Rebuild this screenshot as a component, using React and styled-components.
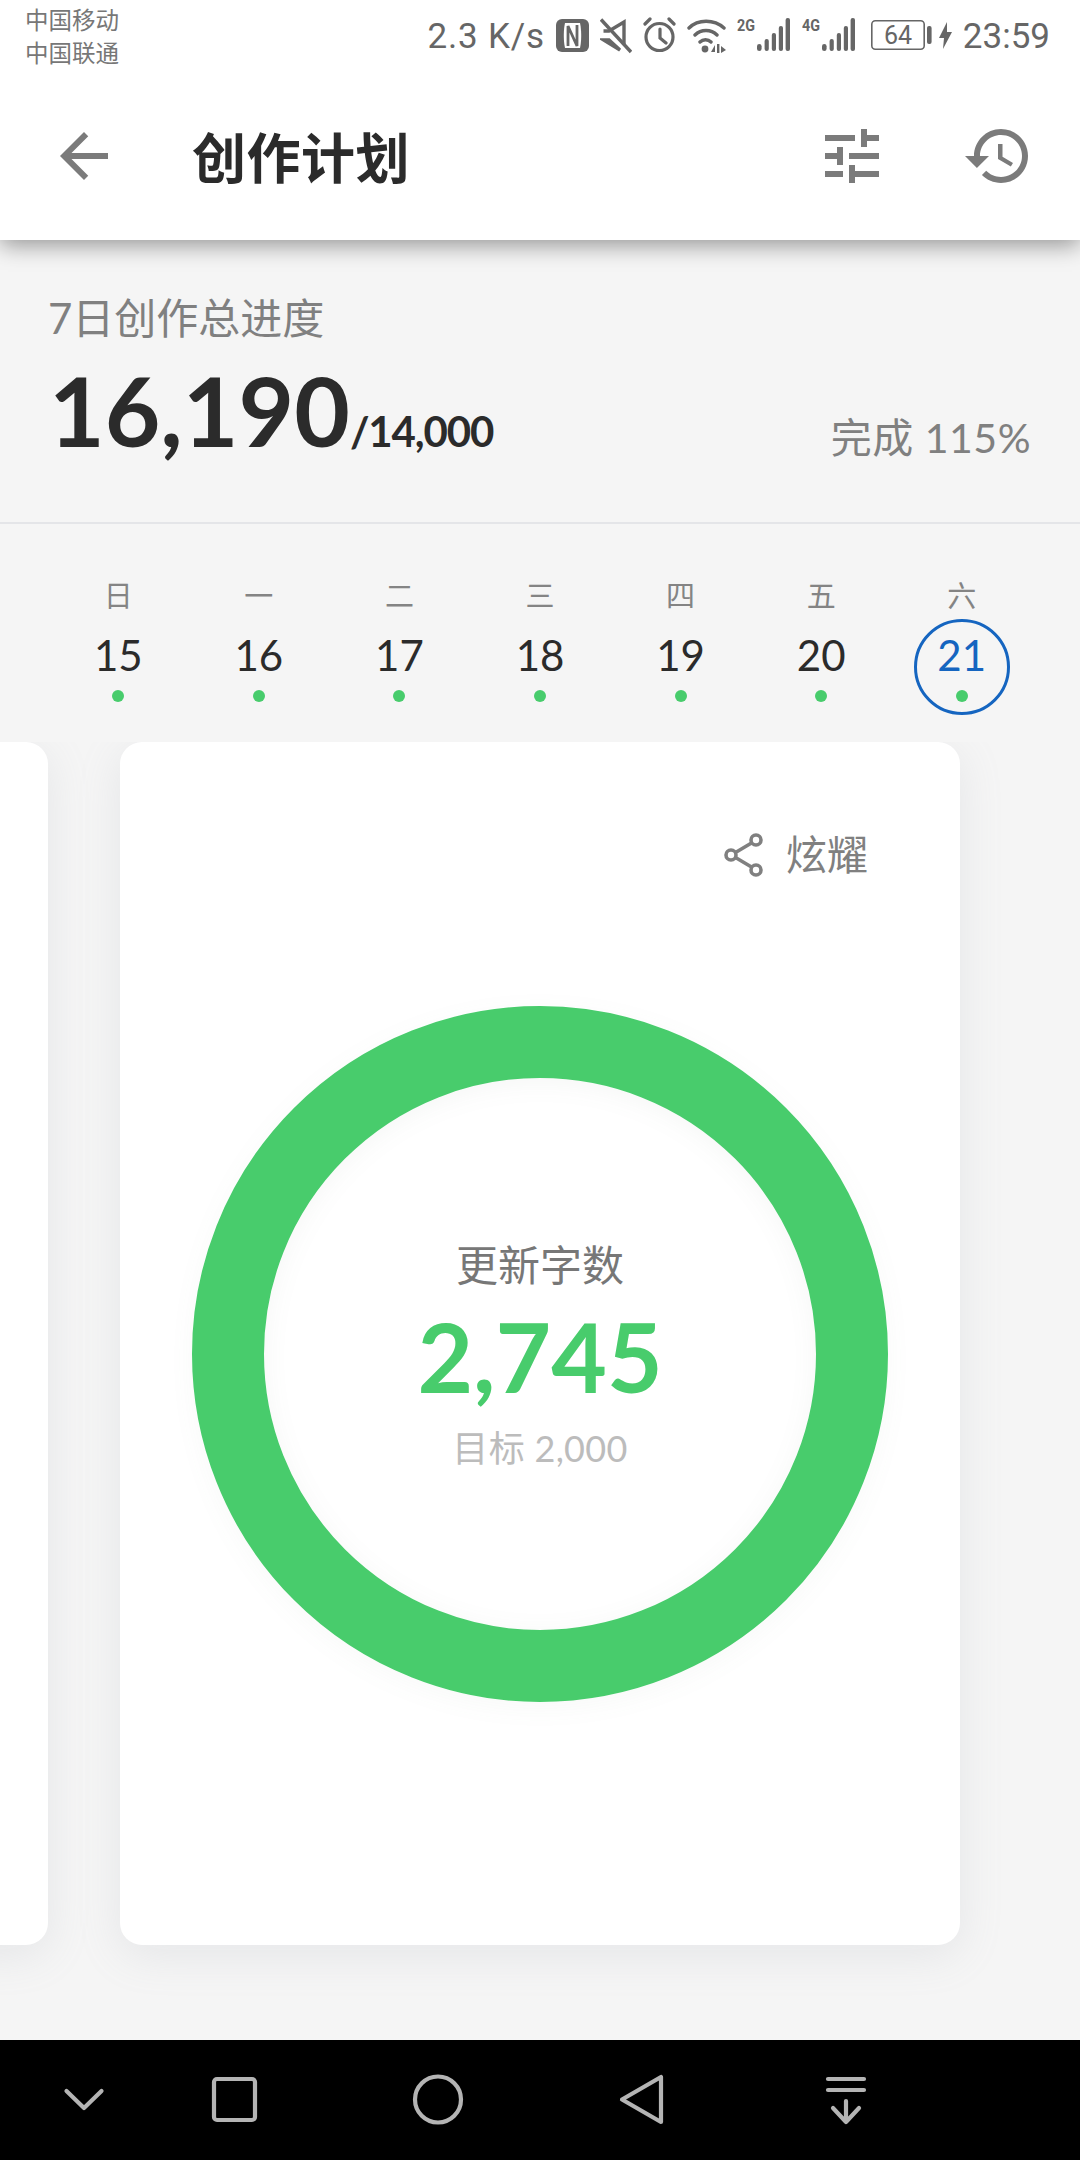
import React from "react";
import styled, { createGlobalStyle } from "styled-components";

const CJK = `"Lato", "Noto Sans CJK SC", sans-serif`;
const GREEN = "#48cc6c";
const GREY = "#666";

const Global = createGlobalStyle`
  html, body { margin: 0; padding: 0; background: #f5f5f5; }
  * { box-sizing: border-box; }
`;

const Screen = styled.div`
  width: 1080px; height: 2160px; display: flex; flex-direction: column;
  overflow: hidden; background: #f5f5f5; font-family: ${CJK};
`;
const TopBars = styled.header`
  height: 240px; background: #fff; display: flex; flex-direction: column;
  box-shadow: 0 5px 22px rgba(0,0,0,.4); position: relative; z-index: 2; flex: none;
`;
const StatusBar = styled.div`
  height: 72px; padding: 0 30px 0 25px; display: flex; justify-content: space-between; align-items: center;
`;
const Carrier = styled.div`
  font: 23.5px/33px "Noto Sans CJK SC", sans-serif; color: #777; width: 120px;
`;
const StatusRight = styled.div`
  display: flex; align-items: center; color: ${GREY};
  font: 400 35px/1 Roboto, sans-serif; gap: 11px;
`;
const Speed = styled.span`
  letter-spacing: .8px;
`;
const AppBar = styled.div`
  flex: 1; display: flex; align-items: center; padding: 0 46px 0 48px;
`;
const Title = styled.h1`
  margin: 0 0 0 72px; flex: 1; color: #2b2b2b; font: 700 54px/1 "Noto Sans CJK SC", sans-serif;
  letter-spacing: .5px;
`;
const ActionIcon = styled.svg`
  width: 72px; height: 72px; margin-left: ${p => p.$gap || 0}px; display: block; flex: none; fill: #7b7b7b;
`;
const Summary = styled.section`
  height: 284px; padding: 54px 48px 0; border-bottom: 2px solid #e4e5e8; flex: none;
`;
const SummaryLabel = styled.div`
  font-size: 42px; line-height: 48px; color: #808080;
`;
const SummaryRow = styled.div`
  display: flex; justify-content: space-between; margin-top: 13px;
`;
const Total = styled.div`
  font-weight: 700; font-size: 96px; line-height: 110px; color: #2b2b2b; padding-left: 1px;
`;
const Goal = styled.span`
  font-size: 42px; font-weight: 700; letter-spacing: -1.1px;
`;
const Done = styled.div`
  align-self: flex-end; font-size: 41px; line-height: 54px; color: #808080; letter-spacing: .5px;
  padding-right: 1px; margin-bottom: 21px;
`;
const Week = styled.div`
  display: grid; grid-template-columns: repeat(7, 1fr); padding: 48px 48px 0; height: 218px; flex: none;
`;
const Day = styled.div`
  display: flex; flex-direction: column; align-items: center; position: relative;
`;
const DayName = styled.div`
  font: 400 29px/44px "Noto Sans CJK SC", sans-serif; color: #848484;
`;
const DayNum = styled.div`
  font-size: 42px; line-height: 50px; margin-top: 14px; color: ${p => p.$today ? "#1565c0" : "#2b2b2b"};
`;
const Dot = styled.div`
  width: 12px; height: 12px; border-radius: 50%; background: ${GREEN}; margin-top: 10px;
`;
const TodayRing = styled.div`
  position: absolute; left: 50%; top: 47px; width: 96px; height: 96px; margin-left: -48px;
  border-radius: 50%; border: 3px solid #1565c0;
`;
const Carousel = styled.div`
  display: flex; gap: 72px; height: 1297px; flex: none; overflow: hidden;
`;
const Card = styled.article`
  flex: none; width: 840px; height: 1203px; background: #fff; border-radius: 22px;
  box-shadow: 0 10px 44px rgba(150,155,165,.16);
  margin-left: ${p => p.$offscreen ? "-792px" : 0};
  display: flex; flex-direction: column; align-items: center;
`;
const ShareBtn = styled.div`
  align-self: flex-end; display: flex; align-items: center; gap: 22px; margin: 85px 92px 0 0;
  color: #808080; font-size: 41px; line-height: 56px;
`;
const Gauge = styled.div`
  width: 696px; height: 696px; border-radius: 50%; margin-top: 123px; position: relative;
  border: 72px solid ${GREEN}; display: flex; flex-direction: column; align-items: center;
  box-shadow: 0 6px 26px rgba(120,130,120,.05), inset 0 4px 26px rgba(120,130,120,.07);
`;
const GaugeLabel = styled.div`
  font-size: 42px; line-height: 56px; color: #777; margin-top: 159px;
`;
const GaugeValue = styled.div`
  font-weight: 700; font-size: 96px; line-height: 100px; color: ${GREEN}; margin-top: 13px;
`;
const GaugeGoal = styled.div`
  font-size: 36px; line-height: 50px; color: #bcbcbc; margin-top: 17px; letter-spacing: .3px;
`;
const NavBar = styled.nav`
  margin-top: auto; height: 120px; background: #000; flex: none;
  display: flex; align-items: center; gap: 144px; padding-left: 54px;
`;
const NavIcon = styled.svg`
  width: 60px; height: 60px; display: block; fill: none; stroke: #b4b4b4; stroke-width: 4.2;
  stroke-linecap: round; stroke-linejoin: round; flex: none;
  margin-right: ${p => p.$mr || 0}px;
`;
const StatusIcon = styled.svg`
  display: block; height: 40px; width: ${p => p.$w}px; flex: none; margin-left: ${p => p.$ml || 0}px;
`;

const Icons = {
  nfc: (
    <StatusIcon $w={33} viewBox="0 0 33 40">
      <rect x="0" y="3" width="33" height="33" rx="6" fill={GREY} />
      <path fill="#fff" d="M9 7h15c1.6 7 1.6 18 0 25H9C7.4 25 7.4 14 9 7Z" />
      <path fill="none" stroke={GREY} strokeWidth="2.8" d="M12 30V10l9 20V9" />
    </StatusIcon>
  ),
  mute: (
    <StatusIcon $w={32} viewBox="0 0 32 40">
      <g fill="none" stroke={GREY} strokeWidth="3.4">
        <path d="M3.5 15H9L24 6v22.5M20 34 9 24H3.5z" />
        <path d="M1 3.5 31 36" />
      </g>
    </StatusIcon>
  ),
  alarm: (
    <StatusIcon $w={33} viewBox="0 0 33 40">
      <g fill="none" stroke={GREY} strokeWidth="3.2" strokeLinecap="round">
        <circle cx="16.5" cy="21" r="13.5" />
        <path d="M17 13v9l6 5M2 8l5-5M31 8l-5-5" />
      </g>
    </StatusIcon>
  ),
  wifi: (
    <StatusIcon $w={39} viewBox="0 0 39 40">
      <g fill="none" stroke={GREY} strokeWidth="3.4" strokeLinecap="round">
        <path d="M2 12C11 3 27 3 37 12M8 19c6-6 16-6 22 0M13 26c3-3 8-3 11 0" />
      </g>
      <circle cx="18" cy="33" r="3.4" fill={GREY} />
      <path fill={GREY} d="M28 36v-7l-4 7ZM30 28h2.4v9H30ZM34 30l5 4-5 3Z" />
    </StatusIcon>
  ),
  battery: (
    <StatusIcon $w={61} $ml={5} viewBox="0 0 61 40">
      <rect x="0.8" y="4.8" width="52.4" height="28.4" rx="3.5" fill="none" stroke={GREY} strokeWidth="1.6" />
      <rect x="56" y="10" width="4.6" height="18" rx="2" fill={GREY} />
      <text x="27" y="28" textAnchor="middle" fontFamily="Roboto, sans-serif" fontSize="25" fill={GREY}>64</text>
    </StatusIcon>
  ),
  bolt: (
    <StatusIcon $w={13} $ml={-4} viewBox="0 0 13 40">
      <path fill={GREY} d="M8 6 0 22h5l-1 11 9-17H8Z" />
    </StatusIcon>
  ),
};

const Signal = ({ label, ml }) => (
  <StatusIcon $w={53} $ml={ml} viewBox="0 0 53 40">
    <text x="0" y="15" fontFamily="'Liberation Sans Narrow', Roboto, sans-serif" fontWeight="700" fontSize="16" textLength="18" lengthAdjust="spacingAndGlyphs" fill={GREY}>{label}</text>
    <g fill={GREY}>
      <rect x="20" y="28" width="4.6" height="7" rx="2.3" />
      <rect x="27.6" y="23" width="4.2" height="12" rx="2" />
      <rect x="34.8" y="17" width="4.2" height="18" rx="2" />
      <rect x="41.8" y="10" width="4.2" height="25" rx="2" />
      <rect x="48.6" y="2" width="4.4" height="33" rx="2" />
    </g>
  </StatusIcon>
);

const days = [
  ["日", 15], ["一", 16], ["二", 17], ["三", 18], ["四", 19], ["五", 20], ["六", 21],
];

export default function App() {
  return (
    <Screen>
      <Global />
      <TopBars>
        <StatusBar>
          <Carrier>中国移动<br />中国联通</Carrier>
          <StatusRight>
            <Speed>2.3 K/s</Speed>
            {Icons.nfc}{Icons.mute}{Icons.alarm}{Icons.wifi}
            <Signal label="2G" /><Signal label="4G" ml={1} />
            {Icons.battery}{Icons.bolt}
            <span>23:59</span>
          </StatusRight>
        </StatusBar>
        <AppBar>
          <ActionIcon viewBox="0 0 24 24">
            <path d="M20 11H7.83l5.59-5.59L12 4l-8 8 8 8 1.41-1.41L7.83 13H20v-2z" />
          </ActionIcon>
          <Title>创作计划</Title>
          <ActionIcon viewBox="0 0 24 24">
            <path d="M3 17v2h6v-2H3zM3 5v2h10V5H3zm10 16v-2h8v-2h-8v-2h-2v6h2zM7 9v2H3v2h4v2h2V9H7zm14 4v-2H11v2h10zm-6-4h2V7h4V5h-4V3h-2v6z" />
          </ActionIcon>
          <ActionIcon $gap={74} viewBox="0 0 24 24">
            <path d="M13 3c-4.97 0-9 4.03-9 9H1l3.89 3.89.07.14L9 12H6c0-3.87 3.13-7 7-7s7 3.13 7 7-3.13 7-7 7c-1.93 0-3.68-.79-4.94-2.06l-1.42 1.42C8.27 19.99 10.51 21 13 21c4.97 0 9-4.03 9-9s-4.03-9-9-9zm-1 5v5l4.28 2.54.72-1.21-3.5-2.08V8H12z" />
          </ActionIcon>
        </AppBar>
      </TopBars>

      <Summary>
        <SummaryLabel>7日创作总进度</SummaryLabel>
        <SummaryRow>
          <Total>16,190<Goal>/14,000</Goal></Total>
          <Done>完成 115%</Done>
        </SummaryRow>
      </Summary>

      <Week>
        {days.map(([n, d], i) => (
          <Day key={d}>
            <DayName>{n}</DayName>
            <DayNum $today={i === 6}>{d}</DayNum>
            <Dot />
            {i === 6 && <TodayRing />}
          </Day>
        ))}
      </Week>

      <Carousel>
        <Card $offscreen />
        <Card>
          <ShareBtn>
            <svg width="40" height="44" viewBox="0 0 40 44" style={{ display: "block" }}>
              <g fill="none" stroke="#808080" strokeWidth="3.6">
                <circle cx="7" cy="22" r="5" />
                <circle cx="32" cy="7" r="5" />
                <circle cx="32" cy="37" r="5" />
                <path d="M11.5 19.5 27.5 10M11.5 24.5l16 9.5" />
              </g>
            </svg>
            <span>炫耀</span>
          </ShareBtn>
          <Gauge>
            <GaugeLabel>更新字数</GaugeLabel>
            <GaugeValue>2,745</GaugeValue>
            <GaugeGoal>目标 2,000</GaugeGoal>
          </Gauge>
        </Card>
      </Carousel>

      <NavBar>
        <NavIcon $mr={-54} viewBox="0 0 60 60"><path d="M12.5 21 30 38 47.5 21" /></NavIcon>
        <NavIcon viewBox="0 0 60 60"><rect x="10" y="9" width="41" height="41" rx="3" /></NavIcon>
        <NavIcon viewBox="0 0 60 60"><circle cx="30" cy="29.5" r="23" /></NavIcon>
        <NavIcon viewBox="0 0 60 60"><path d="M10 29.5 49 7v45Z" /></NavIcon>
        <NavIcon viewBox="0 0 60 60"><path d="M12 9h36M12 20h36M30 31v21M17 38l13 14 13-14" /></NavIcon>
      </NavBar>
    </Screen>
  );
}
